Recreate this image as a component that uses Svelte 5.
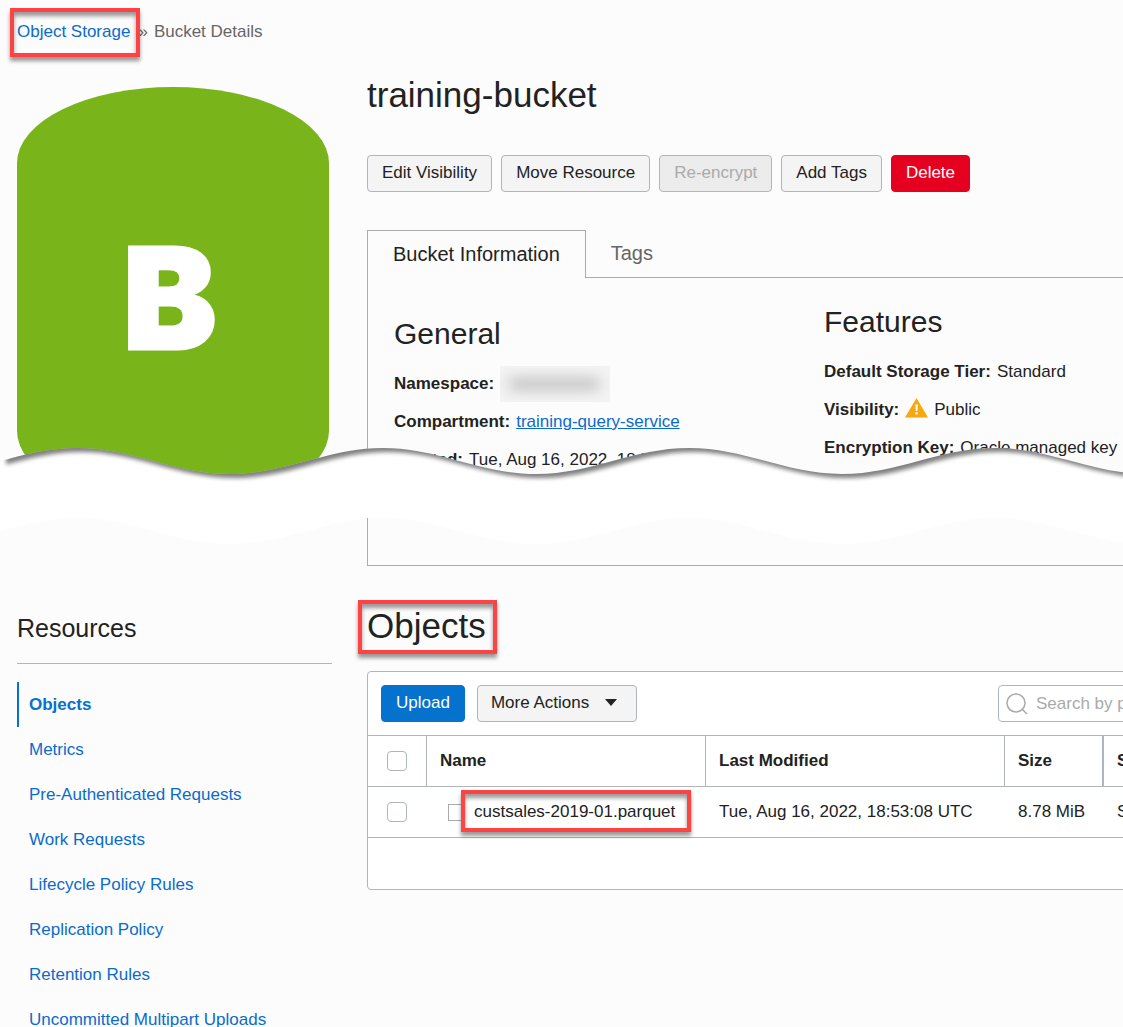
<script>
  const resources = [
    'Objects',
    'Metrics',
    'Pre-Authenticated Requests',
    'Work Requests',
    'Lifecycle Policy Rules',
    'Replication Policy',
    'Retention Rules',
    'Uncommitted Multipart Uploads'
  ];

  const objects = [
    {
      name: 'custsales-2019-01.parquet',
      modified: 'Tue, Aug 16, 2022, 18:53:08 UTC',
      size: '8.78 MiB',
      tier: 'Standard'
    }
  ];

  // Wavy edge of the page break: half a period per cubic segment.
  const HALF = 153;
  const START = -229;
  const SEGMENTS = 28;

  function wave(crest, trough) {
    let d = '';
    for (let i = 0; i < SEGMENTS; i++) {
      const x = START + i * HALF;
      const from = i % 2 ? trough : crest;
      const to = i % 2 ? crest : trough;
      d += ` C${x + 56} ${from} ${x + HALF - 56} ${to} ${x + HALF} ${to}`;
    }
    return d;
  }

  const END = START + SEGMENTS * HALF;
  const upper = `M${START} -40 V8${wave(8, 34)} V-40 Z`;
  const below = `M${START} 160 V8${wave(8, 34)} V160 Z`;
  const lower = `M${START} 160 V78${wave(78, 104)} V160 Z`;
</script>

<div class="page">
  <nav class="crumbs" aria-label="Breadcrumb">
    <span class="callout crumb-callout"><a href="#storage">Object Storage</a></span>
    <span>»</span>
    <span>Bucket Details</span>
  </nav>

  <div class="columns">
    <aside>
      <svg class="bucket" viewBox="0 0 312 420" role="img" aria-label="Bucket">
        <path d="M0 76 A156 76 0 0 1 312 76 V344 A156 76 0 0 1 0 344 Z" fill="#79b41a" />
        <text x="106" y="262">B</text>
      </svg>
      <h2 class="side-title">Resources</h2>
      <ul class="side-nav">
        {#each resources as item, i}
          <li><a href="#resource" class:current={i === 0}>{item}</a></li>
        {/each}
      </ul>
    </aside>

    <main>
      <h1>training-bucket</h1>
      <div class="actions">
        <button>Edit Visibility</button>
        <button>Move Resource</button>
        <button disabled>Re-encrypt</button>
        <button>Add Tags</button>
        <button class="danger">Delete</button>
      </div>

      <div class="tabs" role="tablist">
        <button class="tab active" role="tab" aria-selected="true">Bucket Information</button>
        <div class="tab-rest">
          <button class="tab" role="tab" aria-selected="false">Tags</button>
        </div>
      </div>

      <section class="info">
        <div class="general">
          <h3>General</h3>
          <p><b>Namespace:</b><span class="redacted"></span></p>
          <p><b>Compartment:</b> <a class="underlined" href="#compartment">training-query-service</a></p>
          <p><b>Created:</b> Tue, Aug 16, 2022, 18:50:12 UTC</p>
        </div>
        <div>
          <h3>Features</h3>
          <p><b>Default Storage Tier:</b> Standard</p>
          <p>
            <b>Visibility:</b>
            <svg class="warn" viewBox="0 0 23 20" aria-hidden="true">
              <path d="M11.5 0 L23 19.5 H0 Z" fill="#f8a70c" />
              <path d="M10.3 6.5 h2.6 l-0.5 6.500 h-1.6 z M10.4 14.3 h2.3 v2.3 h-2.3 z" fill="#fff" />
            </svg>
            Public
          </p>
          <p><b>Encryption Key:</b> Oracle managed key</p>
        </div>
      </section>

      <h2 class="objects-title"><span class="callout title-callout">Objects</span></h2>

      <section class="objects">
        <div class="toolbar">
          <button class="primary">Upload</button>
          <button class="more">
            More Actions
            <svg viewBox="0 0 12 7" width="12" height="7" aria-hidden="true"><path d="M0 0 H12 L6 7 Z" fill="#222" /></svg>
          </button>
          <label class="search">
            <svg viewBox="0 0 24 24" width="24" height="24" aria-hidden="true">
              <circle cx="10" cy="11" r="9" />
              <path d="M16.500 17.500 L21 22" />
            </svg>
            <input type="text" placeholder="Search by prefix" aria-label="Search by prefix" />
          </label>
        </div>
        <table>
          <colgroup>
            <col class="c-check" /><col class="c-name" /><col class="c-date" /><col class="c-size" /><col />
          </colgroup>
          <thead>
            <tr>
              <th class="check"><input type="checkbox" aria-label="Select all objects" /></th>
              <th>Name</th>
              <th>Last Modified</th>
              <th class="wide-rule">Size</th>
              <th>Storage Tier</th>
            </tr>
          </thead>
          <tbody>
            {#each objects as o}
              <tr>
                <td class="check"><input type="checkbox" aria-label={`Select ${o.name}`} /></td>
                <td>
                  <div class="file">
                    <span class="file-icon"></span>
                    <span class="callout file-callout">{o.name}</span>
                  </div>
                </td>
                <td>{o.modified}</td>
                <td>{o.size}</td>
                <td>{o.tier}</td>
              </tr>
            {/each}
          </tbody>
        </table>
        <div class="table-foot"></div>
      </section>
    </main>
  </div>

  <svg class="break" aria-hidden="true">
    <defs>
      <clipPath id="under-edge"><path d={below} /></clipPath>
      <clipPath id="from-left"><rect x="6" y="-40" width={END} height="200" /></clipPath>
      <filter id="soft" x="-5%" y="-20%" width="110%" height="140%">
        <feGaussianBlur stdDeviation="2" />
      </filter>
      <clipPath id="band-clip"><rect x="0" y="0" width={END} height="106" /></clipPath>
    </defs>
    <path d={below} fill="#fff" clip-path="url(#band-clip)" />
    <g clip-path="url(#under-edge)">
      <g filter="url(#soft)">
        <g clip-path="url(#from-left)">
          <path d={upper} fill="#000" fill-opacity="0.5" transform="translate(4 4)" />
        </g>
      </g>
    </g>
    <path d={lower} fill="#fcfcfc" clip-path="url(#band-clip)" />
    <path d="M367.5 78 V110" stroke="#a9abae" />
  </svg>
</div>

<style>
  :global(body) {
    background: #fcfcfc;
  }

  .page {
    position: relative;
    height: 100vh;
    overflow: hidden;
    box-sizing: border-box;
    padding-left: 17px;
    font: 17px/20px 'Liberation Sans', Arial, sans-serif;
    color: #222;
    background: #fcfcfc;
  }

  h1, h2, h3, p, ul {
    margin: 0;
    padding: 0;
    font-weight: 400;
  }

  a {
    color: #0b6bcb;
    text-decoration: none;
  }

  .underlined {
    text-decoration: underline;
  }

  .crumbs {
    display: flex;
    gap: 6px;
    align-items: center;
    height: 63px;
    color: #666;
  }

  .crumb-callout {
    margin-right: 2px;
  }

  .callout {
    position: relative;
  }

  .callout::after {
    content: '';
    position: absolute;
    border: 4px solid #ff4343;
    box-shadow: 0 4px 4px rgba(0, 0, 0, 0.4), inset 0 4px 4px rgba(0, 0, 0, 0.4);
    pointer-events: none;
  }

  .crumb-callout::after {
    inset: -14px -10px -15px -7px;
  }

  .title-callout::after {
    inset: -6px -11px -9px -9px;
  }

  .file-callout::after {
    inset: -12px -16px -10px -13px;
  }

  .columns {
    display: flex;
    gap: 35px;
  }

  aside {
    flex: 0 0 315px;
    padding-top: 24px;
  }

  .bucket {
    display: block;
    width: 312px;
    height: 420px;
  }

  .bucket text {
    font: 900 140px Inter, 'Liberation Sans', sans-serif;
    fill: #fff;
    stroke: #fff;
    stroke-width: 3;
  }

  .side-title {
    margin-top: 106px;
    padding-bottom: 20px;
    border-bottom: 1px solid #b0b4c3;
    font-size: 25px;
    line-height: 30px;
  }

  .side-nav {
    margin-top: 18px;
    list-style: none;
  }

  .side-nav a {
    display: block;
    padding-left: 10px;
    border-left: 2px solid transparent;
    line-height: 45px;
  }

  .side-nav .current {
    border-color: #0572ce;
    color: #0572ce;
    font-weight: 700;
  }

  main {
    flex: 1;
    min-width: 0;
    padding-top: 12px;
  }

  h1, .objects-title {
    font-size: 35px;
    line-height: 40px;
  }

  button {
    box-sizing: border-box;
    height: 37px;
    padding: 0 14px 2px;
    border: 1px solid #b0b4bd;
    border-radius: 4px;
    background: #f4f4f4;
    color: #222;
    font: inherit;
    white-space: nowrap;
  }

  button:disabled {
    background: #ececec;
    color: #aaa;
  }

  .danger {
    border-color: #e60020;
    background: #e60020;
    color: #fff;
  }

  .primary {
    border-color: #0572ce;
    background: #0572ce;
    color: #fff;
  }

  .actions {
    display: flex;
    gap: 9px;
    margin-top: 40px;
  }

  .tabs {
    display: flex;
    min-width: 900px;
    margin-top: 38px;
  }

  .tab {
    height: 48px;
    padding: 0 25px 2px;
    border: 0;
    border-radius: 0;
    background: none;
    color: #666;
    font-size: 20px;
  }

  .active {
    border: 1px solid #a9abae;
    border-bottom: 0;
    color: #222;
  }

  .tab-rest {
    flex: 1;
    box-sizing: border-box;
    height: 48px;
    border-bottom: 1px solid #a9abae;
  }

  .info {
    display: grid;
    grid-template-columns: 430px 1fr;
    box-sizing: border-box;
    min-width: 900px;
    padding: 26px 26px 86px;
    border: 1px solid #a9abae;
    border-top: 0;
  }

  .general {
    padding-top: 12px;
  }

  h3 {
    margin-bottom: 13px;
    font-size: 30px;
    line-height: 36px;
  }

  .info p {
    display: flex;
    align-items: center;
    gap: 6px;
    height: 38px;
    white-space: nowrap;
  }

  .redacted {
    width: 110px;
    height: 36px;
    overflow: hidden;
    background: #f4f4f4;
  }

  .redacted::before {
    content: '';
    display: block;
    width: 92px;
    height: 14px;
    margin: 11px 8px;
    border-radius: 6px;
    background: #c6c6c6;
    filter: blur(7px);
  }

  .warn {
    width: 23px;
    height: 20px;
    margin-bottom: 4px;
  }

  .objects-title {
    margin-top: 40px;
  }

  .objects {
    box-sizing: border-box;
    min-width: 900px;
    margin-top: 25px;
    border: 1px solid #b0b4bd;
    border-radius: 4px;
    background: #fff;
  }

  .toolbar {
    display: flex;
    gap: 12px;
    padding: 13px;
  }

  .more {
    display: flex;
    align-items: center;
    justify-content: space-between;
    width: 160px;
    padding-left: 13px;
    padding-right: 19px;
  }

  .search {
    display: flex;
    align-items: center;
    gap: 6px;
    box-sizing: border-box;
    width: 255px;
    height: 37px;
    margin-left: auto;
    padding-left: 7px;
    border: 1px solid #b0b4bd;
    border-radius: 4px;
  }

  .search svg {
    flex: none;
    fill: none;
    stroke: #aaa;
    stroke-width: 1.5;
  }

  .search input {
    min-width: 0;
    flex: 1;
    padding: 0;
    border: 0;
    outline: 0;
    background: none;
    font: inherit;
  }

  .search input::placeholder {
    color: #aaa;
  }

  table {
    width: 100%;
    table-layout: fixed;
    border-spacing: 0;
  }

  .c-check {
    width: 59px;
  }

  .c-name {
    width: 279px;
  }

  .c-date {
    width: 299px;
  }

  .c-size {
    width: 99px;
  }

  th, td {
    box-sizing: border-box;
    height: 51px;
    padding: 0 0 0 13px;
    border-bottom: 1px solid #b0b4bd;
    text-align: left;
    white-space: nowrap;
  }

  th {
    height: 52px;
    border-top: 1px solid #b0b4bd;
    border-right: 1px solid #b0b4bd;
  }

  .wide-rule {
    border-right-width: 2px;
  }

  .check {
    padding-left: 19px;
  }

  .check input {
    display: block;
    appearance: none;
    box-sizing: border-box;
    width: 20px;
    height: 20px;
    margin: 0;
    border: 1px solid #b0b4bd;
    border-radius: 4px;
    background: #fff;
  }

  .file {
    display: flex;
    align-items: center;
    gap: 9px;
    padding-left: 8px;
  }

  .file-icon {
    box-sizing: border-box;
    width: 17px;
    height: 17px;
    border: 1px solid #aaa;
  }

  .table-foot {
    height: 51px;
  }

  .break {
    position: absolute;
    top: 440px;
    left: 0;
    width: 100%;
    height: 110px;
    pointer-events: none;
  }
</style>
